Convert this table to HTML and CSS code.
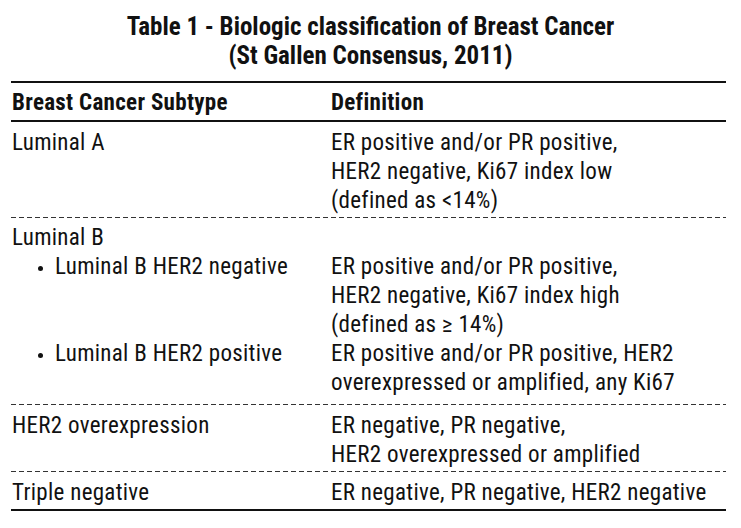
FILE: index.html
```html
<!DOCTYPE html>
<html>
<head>
<meta charset="utf-8">
<link rel="stylesheet" href="styles.css">
</head>
<body>
<h1 class="title">Table 1 - Biologic classification of Breast Cancer<br>(St Gallen Consensus, 2011)</h1>
<div class="table">
  <div class="rule"></div>
  <div class="row head">
    <div class="c1">Breast Cancer Subtype</div>
    <div class="c2">Definition</div>
  </div>
  <div class="rule"></div>
  <div class="row r-a">
    <div class="c1">Luminal A</div>
    <div class="c2">ER positive and/or PR positive,<br>HER2 negative, Ki67 index low<br>(defined as &lt;14%)</div>
  </div>
  <div class="dash"></div>
  <div class="row r-b">
    <div class="c1">Luminal B</div>
    <div class="c2"></div>
    <div class="c1 sub"><span class="dot"></span>Luminal B HER2 negative</div>
    <div class="c2">ER positive and/or PR positive,<br>HER2 negative, Ki67 index high<br>(defined as <span class="ge">≥</span> 14%)</div>
    <div class="c1 sub"><span class="dot"></span>Luminal B HER2 positive</div>
    <div class="c2">ER positive and/or PR positive, HER2<br>overexpressed or amplified, any Ki67</div>
  </div>
  <div class="dash"></div>
  <div class="row r-c">
    <div class="c1">HER2 overexpression</div>
    <div class="c2">ER negative, PR negative,<br>HER2 overexpressed or amplified</div>
  </div>
  <div class="dash"></div>
  <div class="row r-d">
    <div class="c1">Triple negative</div>
    <div class="c2">ER negative, PR negative, HER2 negative</div>
  </div>
  <div class="rule"></div>
</div>
</body>
</html>
```
FILE: styles.css
```css
html, body {
  margin: 0;
  padding: 0;
  background: #ffffff;
}
body {
  font-family: "Roboto Condensed", "Roboto", "Liberation Sans", sans-serif;
  font-stretch: condensed;
  color: #111111;
}
.title {
  margin: 0;
  padding-top: 12px;
  height: 69px;
  font-size: 25px;
  line-height: 29px;
  font-weight: bold;
  text-align: center;
}
.table {
  margin-left: 11px;
  width: 715px;
  font-size: 23px;
  line-height: 29px;
  letter-spacing: 0.3px;
}
.rule {
  height: 2px;
  background: #111111;
}
.dash {
  height: 1px;
  background: repeating-linear-gradient(to right, #333333 0 5px, transparent 5px 8px);
}
.row {
  display: grid;
  grid-template-columns: 320px 1fr;
  align-items: start;
  padding-left: 1px;
}
.row .c2 {
  margin-left: -1px;
}
.head {
  font-weight: bold;
  letter-spacing: 0.3px;
  padding-top: 5px;
  padding-bottom: 3px;
}
.r-a {
  padding-top: 6px;
  padding-bottom: 2px;
}
.r-b {
  padding-top: 5px;
  padding-bottom: 7px;
}
.r-c {
  padding-top: 6px;
  padding-bottom: 2px;
}
.r-d {
  padding-top: 6px;
  padding-bottom: 2px;
}
.sub {
  display: flex;
  align-items: center;
  padding-left: 26px;
}
.dot {
  flex: none;
  width: 5px;
  height: 5px;
  border-radius: 50%;
  background: #111111;
  margin-right: 12px;
  margin-top: 3px;
}
```
